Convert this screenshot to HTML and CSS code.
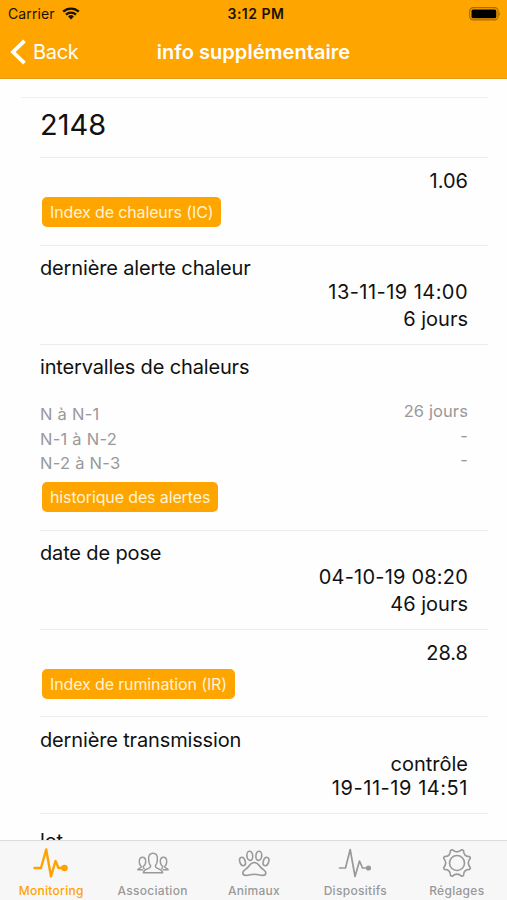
FILE: index.html
```html
<!DOCTYPE html>
<html lang="fr">
<head>
    <meta charset="UTF-8">
    <meta name="viewport" content="width=device-width, initial-scale=1.0">
    <title>info supplémentaire</title>
    <link rel="stylesheet" href="styles.css">
</head>
<body>

<div class="screen">
    <header class="header">
        <!-- Status bar -->
        <div class="status-bar">
            <div class="carrier">
                <span class="carrier-name">Carrier</span>
                <svg class="wifi" width="18" height="13" viewBox="0 0 18 13">
                    <path d="M1.2 4.7a11.2 11.2 0 0 1 15.6 0M4 7.6a7.2 7.2 0 0 1 10 0" fill="none" stroke="#1a1200" stroke-width="2.3"/>
                    <path d="M9 12.4L6.1 9.5a4.2 4.2 0 0 1 5.8 0z" fill="#1a1200"/>
                </svg>
            </div>
            <span class="time">3:12 PM</span>
            <svg class="battery" width="33" height="14" viewBox="0 0 33 14">
                <rect x="0.7" y="0.7" width="28.4" height="12.2" rx="3.6" fill="none" stroke="#a66c00" stroke-width="1.2"/>
                <rect x="2.5" y="2.5" width="24.8" height="8.8" rx="1.6" fill="#000"/>
                <path d="M30.3 4.6q1.8 2.2 0 4.4z" fill="#a66c00"/>
            </svg>
        </div>
        <!-- Navigation bar -->
        <div class="nav-bar">
            <a class="back">
                <svg width="17" height="26" viewBox="0 0 17 26">
                    <path d="M14.5 1.8L3 13l11.5 11.2" fill="none" stroke="#fff" stroke-width="3.8"/>
                </svg>
                <span>Back</span>
            </a>
            <h1>info supplémentaire</h1>
        </div>
    </header>

    <main class="content">
        <div class="row row-title">
            <h2>2148</h2>
        </div>

        <div class="row row-index">
            <p class="value">1.06</p>
            <button class="btn">Index de chaleurs (IC)</button>
        </div>

        <div class="row row-date">
            <p class="label">dernière alerte chaleur</p>
            <p class="value date date-alerte">13-11-19 14:00</p>
            <p class="value">6 jours</p>
        </div>

        <div class="row row-intervals">
            <p class="label">intervalles de chaleurs</p>
            <div class="intervals">
                <div class="names">
                    <p>N à N-1</p>
                    <p>N-1 à N-2</p>
                    <p>N-2 à N-3</p>
                </div>
                <div class="days">
                    <p>26 jours</p>
                    <p>-</p>
                    <p>-</p>
                </div>
            </div>
            <button class="btn">historique des alertes</button>
        </div>

        <div class="row row-date">
            <p class="label">date de pose</p>
            <p class="value date">04-10-19 08:20</p>
            <p class="value">46 jours</p>
        </div>

        <div class="row row-index row-ir">
            <p class="value">28.8</p>
            <button class="btn">Index de rumination (IR)</button>
        </div>

        <div class="row row-transmission">
            <p class="label">dernière transmission</p>
            <p class="value">contrôle</p>
            <p class="value date-transmission">19-11-19 14:51</p>
        </div>

        <div class="row row-lot">
            <p class="label">lot</p>
        </div>
    </main>

    <!-- Tab bar -->
    <nav class="tab-bar">
        <a class="tab active">
            <svg width="36" height="32" viewBox="0 0 36 32">
                <path d="M1.5 21h6.5l5.2-18.500 4.800 27 4.500-15.500 3 7h4" fill="none" stroke="currentColor" stroke-width="2.4" stroke-linejoin="round" stroke-linecap="round"/>
                <circle cx="31.5" cy="21" r="3.3" fill="currentColor"/>
            </svg>
            <span>Monitoring</span>
        </a>
        <a class="tab">
            <svg width="36" height="32" viewBox="0 0 36 32" fill="none" stroke="currentColor" stroke-width="1.4" stroke-linejoin="round">
                <path d="M15.700 18.700c-1.500-1.500-2.100-4-2.100-6.900 0-3.700 1.700-5.600 4.400-5.600s4.400 1.900 4.400 5.600c0 2.900-.6 5.400-2.100 6.900 0 4.100 6.700 2.300 7.400 7.100H8.300c.7-4.800 7.400-3 7.400-7.100z"/>
                <path d="M9.700 21.900c-1-.4-1.500-1.200-1.500-2.400 1.600-.9 2.500-2.600 2.500-4.900 0-2.900-1-4.300-3.200-4.300s-3.200 1.400-3.200 4.300c0 2.300.6 4 2.100 4.900 0 2-3 1.200-3.600 3.300h5.500"/>
                <path d="M26.300 21.900c1-.4 1.500-1.200 1.500-2.400-1.600-.9-2.500-2.600-2.500-4.900 0-2.900 1-4.300 3.200-4.300s3.200 1.400 3.200 4.300c0 2.300-.6 4-2.100 4.900 0 2 3 1.200 3.600 3.300h-5.500"/>
            </svg>
            <span>Association</span>
        </a>
        <a class="tab">
            <svg width="36" height="32" viewBox="0 0 36 32" fill="none" stroke="currentColor" stroke-width="1.6">
                <ellipse cx="6.500" cy="14.500" rx="2.700" ry="4.300" transform="rotate(-18 6.500 14.500)"/>
                <ellipse cx="13.800" cy="8.800" rx="2.900" ry="4.600" transform="rotate(-6 13.800 8.800)"/>
                <ellipse cx="22.800" cy="8.800" rx="2.900" ry="4.600" transform="rotate(6 22.800 8.800)"/>
                <ellipse cx="30" cy="14.500" rx="2.700" ry="4.300" transform="rotate(18 30 14.500)"/>
                <path d="M18.300 15.500c3.800 0 4.700 3.200 6.700 5.100 1.900 1.800 4.800 2.600 4.800 5.300 0 1.700-1.400 2.500-3.300 2.500-3 0-5-1.200-8.200-1.200s-5.200 1.200-8.200 1.200c-1.900 0-3.300-.8-3.300-2.500 0-2.700 2.900-3.500 4.800-5.300 2-1.900 2.900-5.100 6.700-5.100z"/>
            </svg>
            <span>Animaux</span>
        </a>
        <a class="tab">
            <svg width="36" height="32" viewBox="0 0 36 32">
                <path d="M2.5 21h6l4.700-18.500 4.800 27 4.500-15.500 3 7h4" fill="none" stroke="currentColor" stroke-width="1.7" stroke-linejoin="round" stroke-linecap="round"/>
                <circle cx="31.500" cy="21" r="2.600" fill="currentColor"/>
            </svg>
            <span>Dispositifs</span>
        </a>
        <a class="tab">
            <svg width="36" height="32" viewBox="0 0 36 32" fill="none" stroke="currentColor" stroke-width="1.6" stroke-linejoin="round">
                <path d="M13.200 2.700Q18 7 22.800 2.700L24.500 3.500Q24.500 9.500 30.700 9.600L31.400 11.300Q27.200 16 31.400 20.700L30.700 22.400Q24.500 22.500 24.500 28.500L22.800 29.300Q18 25 13.200 29.300L11.500 28.500Q11.500 22.500 5.300 22.400L4.600 20.700Q8.800 16 4.600 11.300L5.300 9.600Q11.500 9.500 11.500 3.500z"/>
                <circle cx="18" cy="16" r="7.500"/>
            </svg>
            <span>Réglages</span>
        </a>
    </nav>
</div>

</body>
</html>
```
FILE: styles.css
```css
/* Basic styling */
* {
    box-sizing: border-box;
}
body {
    font-family: Inter, "Liberation Sans", sans-serif;
    background-color: #fefefe;
    color: #111;
    margin: 0;
}
h1, h2, p {
    margin: 0;
    font-weight: 400;
}
.screen {
    display: flex;
    flex-direction: column;
    height: 900px;
    overflow: hidden;
}

/* Header */
.header {
    flex: none;
    height: 79px;
    background-color: #ffa500;
    border-bottom: 1px solid #e69a18;
}
.status-bar {
    display: grid;
    grid-template-columns: 1fr auto 1fr;
    align-items: center;
    height: 27px;
    padding: 0 5px 0 8px;
    color: #1a1200;
    font-size: 14px;
}
.carrier {
    display: flex;
    align-items: center;
    gap: 7px;
}
.carrier-name {
    letter-spacing: 0.1px;
}
.time {
    padding-left: 2px;
    font-weight: 600;
    letter-spacing: 0.5px;
}
.battery {
    justify-self: end;
}
.nav-bar {
    display: grid;
    grid-template-columns: 1fr auto 1fr;
    align-items: center;
    height: 50px;
    padding: 0 10px;
    color: #fff;
}
.back {
    display: flex;
    align-items: center;
    gap: 6px;
    font-size: 20px;
    letter-spacing: -0.3px;
}
.nav-bar h1 {
    font-size: 20px;
    font-weight: 600;
    letter-spacing: 0.05px;
}

/* Content rows */
.content {
    flex: 1;
    min-height: 0;
    overflow: hidden;
    margin: 18px 19px 0 21px;
    border-top: 1px solid #efefef;
}
.row {
    margin-left: 19px;
    padding-right: 20px;
    border-bottom: 1px solid #ececec;
    font-size: 20px;
    line-height: 24px;
}
.row-title {
    height: 60px;
    padding-top: 9px;
}
.row-title h2 {
    font-size: 29px;
    line-height: 35px;
}
.label {
    letter-spacing: -0.15px;
}
.value {
    text-align: right;
}
.row-index {
    height: 88px;
    padding-top: 11px;
}
.row-date {
    height: 99px;
    padding-top: 10px;
}
.date {
    margin-bottom: 3px;
    letter-spacing: 0.2px;
}
.date-alerte {
    letter-spacing: 0.45px;
}
.date-transmission {
    letter-spacing: 0.55px;
}
.row-intervals {
    height: 186px;
    padding-top: 10px;
}
.intervals {
    display: flex;
    justify-content: space-between;
    margin-top: 20px;
    color: #999;
    font-size: 16.5px;
    line-height: 24.5px;
}
.names {
    padding-top: 3px;
    letter-spacing: 0.25px;
}
.days {
    text-align: right;
    letter-spacing: 0.1px;
}
.row-intervals .btn {
    margin-top: 6px;
}
.row-ir {
    height: 87px;
}
.row-transmission {
    height: 97px;
    padding-top: 11px;
}
.row-lot {
    padding-top: 15px;
}
.btn {
    display: block;
    height: 30px;
    margin: 4px 0 0 2px;
    padding: 0 8px;
    background-color: #ffa500;
    color: #fff3d6;
    border: none;
    border-radius: 5px;
    font-family: inherit;
    font-size: 16px;
    letter-spacing: -0.13px;
    cursor: pointer;
}

/* Tab bar */
.tab-bar {
    flex: none;
    display: grid;
    grid-template-columns: repeat(5, 1fr);
    height: 60px;
    background-color: #f7f7f7;
    border-top: 1px solid #dcdcdc;
}
.tab {
    display: flex;
    flex-direction: column;
    align-items: center;
    padding: 6px 0 0 1px;
    color: #999;
    font-size: 12px;
    font-weight: 500;
    letter-spacing: 0.3px;
    line-height: 15px;
}
.tab span {
    margin-top: 4px;
}
.tab.active {
    color: #ffa200;
}
```
